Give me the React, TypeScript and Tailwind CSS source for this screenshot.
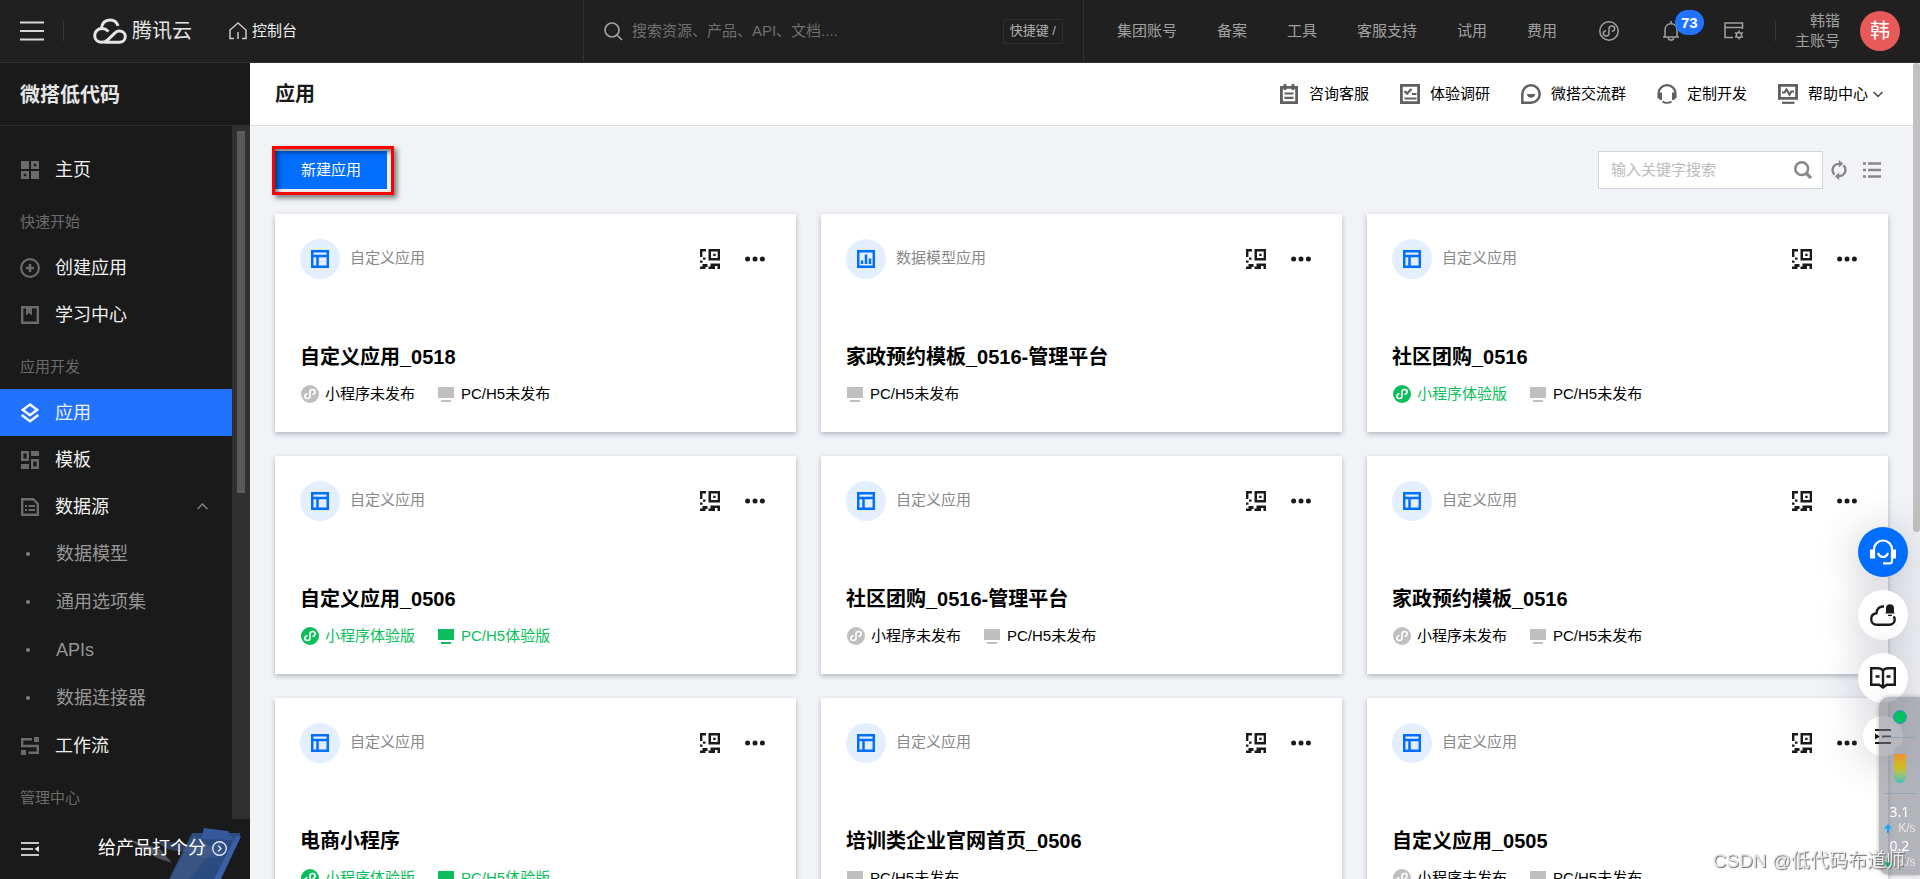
import React, { useState } from 'react';

type IconProps = { className?: string };
type AppKind = 'custom' | 'model';
type Status = 'draft' | 'trial';

interface AppItem {
  name: string;
  kind: AppKind;
  mini?: Status;
  pc: Status;
}

const apps: AppItem[] = [
  { name: '自定义应用_0518', kind: 'custom', mini: 'draft', pc: 'draft' },
  { name: '家政预约模板_0516-管理平台', kind: 'model', pc: 'draft' },
  { name: '社区团购_0516', kind: 'custom', mini: 'trial', pc: 'draft' },
  { name: '自定义应用_0506', kind: 'custom', mini: 'trial', pc: 'trial' },
  { name: '社区团购_0516-管理平台', kind: 'custom', mini: 'draft', pc: 'draft' },
  { name: '家政预约模板_0516', kind: 'custom', mini: 'draft', pc: 'draft' },
  { name: '电商小程序', kind: 'custom', mini: 'trial', pc: 'trial' },
  { name: '培训类企业官网首页_0506', kind: 'custom', pc: 'draft' },
  { name: '自定义应用_0505', kind: 'custom', mini: 'draft', pc: 'draft' },
];

const topLinks = ['集团账号', '备案', '工具', '客服支持', '试用', '费用'];
const statusText: Record<Status, string> = { draft: '未发布', trial: '体验版' };

/* ---------- icons ---------- */

const MenuIcon = () => (
  <svg width="24" height="20" viewBox="0 0 24 20" fill="none" stroke="#d8d8d8" strokeWidth="2">
    <path d="M0 1.500h24M0 10h24M0 18.500h24" />
  </svg>
);

const CloudLogo = () => (
  <svg width="34" height="26" viewBox="0 0 34 26" fill="none" stroke="#e6e6e6" strokeWidth="3">
    <path d="M8.500 10.600C8.500 5.500 12 2 17 2c4 0 7 2.400 8.100 5.900" />
    <path d="M15.500 13.500C13.500 11.600 11.500 10.600 9 10.600c-4.300 0-7.300 3-7.300 6.800 0 4 3 6.900 7.300 6.900 2.500 0 4.200-1 6-2.700l7-6.700c1.400-1.300 2.700-1.900 4.300-1.900 3.400 0 6 2.500 6 5.600 0 3.200-2.600 5.700-6 5.700H11.500" />
  </svg>
);

const HomeIcon = () => (
  <svg width="18" height="18" viewBox="0 0 18 18" fill="none" stroke="#c8c8c8" strokeWidth="1.500">
    <path d="M5 16.500H1V8l8-7 8 7v8.500h-4M9 10v7" />
  </svg>
);

const TopSearchIcon = () => (
  <svg width="19" height="19" viewBox="0 0 19 19" fill="none" stroke="#a0a0a0" strokeWidth="1.700">
    <circle cx="8" cy="8" r="7" />
    <path d="M13 13l5 5" />
  </svg>
);

// two hooks joined by a stem, drawn on a 20px grid
const miniPath = 'M6.500 9.700c-1.300.4-2.200 1.400-2.200 2.600 0 1.600 1.300 2.700 2.900 2.700s2.800-1.200 2.800-2.700V7.700C10 6.200 11.200 5 12.800 5s2.900 1.100 2.900 2.700c0 1.200-.9 2.200-2.200 2.600';

const MiniOutlineIcon = () => (
  <svg width="20" height="20" viewBox="0 0 20 20" fill="none" stroke="#a0a0a0" strokeWidth="1.500">
    <circle cx="10" cy="10" r="9.200" />
    <path d={miniPath} strokeLinecap="round" />
  </svg>
);

const BellIcon = () => (
  <svg width="18" height="20" viewBox="0 0 18 20" fill="none" stroke="#a0a0a0" strokeWidth="1.500">
    <path d="M1 16h16M3 16V9c0-3.600 2.500-6.300 6-6.300S15 5.400 15 9v7M9 0v3M6.300 17c.3 1.400 1.300 2.100 2.700 2.100s2.400-.7 2.700-2.100" />
  </svg>
);

const PanelGearIcon = () => (
  <svg width="20" height="18" viewBox="0 0 20 18" fill="none" stroke="#a0a0a0" strokeWidth="1.500">
    <path d="M9 15.500H1V1h17.500v6M1 5.500h17.500" />
    <circle cx="15" cy="13" r="2.600" />
    <path d="M15 8.500v2M15 15.500v2M11 10.700l1.800 1M17.200 14.300l1.800 1M11 15.300l1.800-1M17.200 11.700l1.800-1" />
  </svg>
);

const ClipboardIcon = () => (
  <svg width="20" height="20" viewBox="0 0 20 20" fill="none" stroke="#606060" strokeWidth="2.800">
    <path d="M2.400 3.400h15.200v15.200H2.400zM6 0v6M14 0v6" />
    <path d="M5.500 9.500h9M5.500 13.800h9" strokeWidth="2.200" />
  </svg>
);

const SurveyIcon = () => (
  <svg width="20" height="20" viewBox="0 0 20 20" fill="none" stroke="#606060" strokeWidth="2.800">
    <path d="M1.400 1.400h17.200v17.200H1.400z" />
    <path d="M4.500 7l2.500 2.600L11.500 5M12 10h4.500M4.500 14.500h12" strokeWidth="2.200" />
  </svg>
);

const ChatIcon = () => (
  <svg width="20" height="20" viewBox="0 0 20 20" fill="none" stroke="#606060" strokeWidth="2.500">
    <path d="M1.300 18.700V10a8.700 8.700 0 1 1 8.700 8.700z" />
    <path d="M5.800 10h8.400c-.3 2.200-2 3.700-4.200 3.700S6.100 12.200 5.800 10z" fill="#606060" stroke="none" />
  </svg>
);

const HeadphoneIcon = () => (
  <svg width="20" height="20" viewBox="0 0 20 20" fill="none" stroke="#606060" strokeWidth="2.200">
    <path d="M1.500 14V9.500a8.500 8.300 0 0 1 17 0V14" />
    <path d="M1 8.500h4V16H3L1 14zM19 8.500h-4V16h2l2-2z" fill="#606060" stroke="none" />
    <path d="M5.500 17.500c2.500 1.800 6.500 1.800 9 0" strokeWidth="2" />
  </svg>
);

const MonitorPulseIcon = () => (
  <svg width="20" height="20" viewBox="0 0 20 20" fill="none" stroke="#606060" strokeWidth="2.800">
    <path d="M1.400 1.400h17.200v13H1.400z" />
    <path d="M4 8.500h2.500L8.500 5.500l3 5 1.800-3H16" strokeWidth="2.200" />
    <path d="M4 18.800h12.500" strokeWidth="2.200" />
  </svg>
);

const ChevronDown = () => (
  <svg width="10" height="7" viewBox="0 0 10 7" fill="none" stroke="#404040" strokeWidth="1.500">
    <path d="M.6 1L5 5.500 9.400 1" />
  </svg>
);

const SearchIcon = () => (
  <svg width="18" height="18" viewBox="0 0 18 18" fill="none" stroke="#888" strokeWidth="2.500">
    <circle cx="7.700" cy="7.700" r="6.400" />
    <path d="M12.500 12.500l4.500 4.500" strokeWidth="3.200" />
  </svg>
);

const RefreshIcon = () => (
  <svg width="16" height="20" viewBox="0 0 16 20" fill="none" stroke="#888" strokeWidth="2.400">
    <path d="M9 4c-4.300-.6-7.500 2.200-7.500 6 0 1.900.7 3.400 2 4.600M7 16c4.300.6 7.500-2.200 7.500-6 0-1.900-.7-3.400-2-4.600" />
    <path d="M7.800 0v7.600l4.400-3.800zM8.200 20v-7.600l-4.400 3.800z" fill="#888" stroke="none" />
  </svg>
);

const ListIcon = () => (
  <svg width="18" height="16" viewBox="0 0 18 16" fill="none" stroke="#888" strokeWidth="2.600">
    <path d="M0 1.500h3M5 1.500h13M0 8h3M5 8h13M0 14.500h3M5 14.500h13" />
  </svg>
);

const GridIcon = () => (
  <svg width="18" height="18" viewBox="0 0 18 18" fill="#6b6b6b">
    <path d="M0 0h8v8H0zM10 10h8v8h-8z" />
    <path fillRule="evenodd" d="M10 0h8v8h-8zM12.800 2.800v2.400h2.400V2.800zM0 10h8v8H0zM2.800 12.800v2.400h2.400v-2.400z" />
  </svg>
);

const PlusCircleIcon = () => (
  <svg width="20" height="20" viewBox="0 0 20 20" fill="none" stroke="#6b6b6b" strokeWidth="2.200">
    <circle cx="10" cy="10" r="8.900" />
    <path d="M10 6v8M6 10h8" strokeWidth="2.600" />
  </svg>
);

const BookmarkIcon = () => (
  <svg width="18" height="18" viewBox="0 0 18 18" fill="none" stroke="#6b6b6b" strokeWidth="2.400">
    <path d="M1.200 1.200h15.600v15.600H1.200z" />
    <path d="M5 1h6v8.500L8 7 5 9.500z" fill="#6b6b6b" stroke="none" />
  </svg>
);

const LayersIcon = () => (
  <svg width="18" height="20" viewBox="0 0 18 20" fill="none" stroke="#fff" strokeWidth="2.400">
    <path d="M9 1.500l7.200 5.300L9 12.200 1.800 6.800zM.7 12L9 18.300l8.300-6.300" />
  </svg>
);

const TemplateIcon = () => (
  <svg width="18" height="18" viewBox="0 0 18 18" fill="none" stroke="#6b6b6b" strokeWidth="2.400">
    <path d="M1.200 1.200h5.600v7.600H1.200zM11.200 9.200h5.600v7.600h-5.600z" />
    <path d="M10 0h8v5h-8zM0 13h8v5H0z" fill="#6b6b6b" stroke="none" />
  </svg>
);

const DataIcon = () => (
  <svg width="18" height="18" viewBox="0 0 18 18" fill="none" stroke="#6b6b6b" strokeWidth="2.400">
    <path d="M1.200 1.200h11L16.800 5.700v11.100H1.200z" />
    <path d="M4 8h2M7.500 8H14M4 12h2M7.500 12H14" strokeWidth="2.200" />
  </svg>
);

const FlowIcon = () => (
  <svg width="18" height="18" viewBox="0 0 18 18" fill="none" stroke="#6b6b6b" strokeWidth="2.400">
    <path d="M11 2.200H1.200V9h15.600v6.800H7.500" />
    <path d="M13 0h5v5h-5zM0 13h5v5H0z" fill="#6b6b6b" stroke="none" />
  </svg>
);

const CollapseIcon = () => (
  <svg width="18" height="14" viewBox="0 0 18 14" fill="none" stroke="#c8c8c8" strokeWidth="2">
    <path d="M0 1h18M0 7h12M0 13h18" />
    <path d="M18 4v6l-4.500-3z" fill="#e8e8e8" stroke="none" />
  </svg>
);

const CustomAppIcon = () => (
  <svg width="18" height="18" viewBox="0 0 18 18" fill="none" stroke="#006eff" strokeWidth="2.500">
    <path d="M1.200 1.200h15.600v15.600H1.200zM1 6h16M6.500 6v11" />
  </svg>
);

const ModelAppIcon = () => (
  <svg width="18" height="18" viewBox="0 0 18 18" fill="none" stroke="#006eff" strokeWidth="2.500">
    <path d="M1.200 1.200h15.600v15.600H1.200zM5 10.500V14M9 4.500V14M13 8.500V14" />
  </svg>
);

const QrIcon = () => (
  <svg width="20" height="20" viewBox="0 0 20 20" fill="#1a1a1a">
    <path d="M0 0h6v2.400H2.400V8H0zM3 8.500h2.500v2.200H3zM0 11.500h2.500v2.200H0z" />
    <path fillRule="evenodd" d="M8.500 0H20v11.500H8.500zM11 2.500v6.600h6.700V2.500z" />
    <path d="M13.200 4.700h2.400V7h-2.400zM2.500 15h5v3h-2v2H0v-2.400h2.500zM10.500 14.500H20V20h-2.500v-3H15v3H8.500v-2.400h2z" />
  </svg>
);

const DotsIcon = () => (
  <svg width="20" height="6" viewBox="0 0 20 6" fill="#1a1a1a">
    <circle cx="2.600" cy="3" r="2.500" />
    <circle cx="10" cy="3" r="2.500" />
    <circle cx="17.400" cy="3" r="2.500" />
  </svg>
);

const MiniIcon: React.FC<IconProps> = ({ className }) => (
  <svg width="18" height="18" viewBox="0 0 20 20" className={className}>
    <circle cx="10" cy="10" r="10" fill="currentColor" />
    <path d={miniPath} fill="none" stroke="#fff" strokeWidth="1.800" strokeLinecap="round" />
  </svg>
);

const PcIcon: React.FC<IconProps> = ({ className }) => (
  <svg width="16" height="15" viewBox="0 0 16 15" fill="currentColor" className={className}>
    <path d="M0 0h16v11H0zM3 13h10v2H3z" />
  </svg>
);

const ClipboardArt = () => (
  <svg width="130" height="52" viewBox="0 0 130 52">
    <path d="M12 12l32 10 12 14-15-5z" fill="#50545f" />
    <path d="M76 6h48v6L104 52H53z" fill="#2b4a80" />
    <path d="M120 9h5L105 52h-7z" fill="#3a5fa8" />
    <path d="M40 14c10 2 18 0 30 3 16 4 26 4 36-3v14c-8 4-16 4-24 0-14-6-28 0-42-14z" fill="#46618f" opacity=".55" />
    <path d="M88 1l24 3 6 9-33-1z" fill="#35589c" />
    <path d="M78 8l-24 44h20l24-30z" fill="#5a6b8c" opacity=".3" />
  </svg>
);

/* ---------- sidebar ---------- */

interface NavItemProps {
  icon: React.ReactNode;
  label: string;
  active?: boolean;
  expanded?: boolean;
}

const NavItem: React.FC<NavItemProps> = ({ icon, label, active, expanded }) => (
  <a
    href="#"
    aria-expanded={expanded}
    className={`flex h-[47px] items-center pl-5 pr-6 text-lg text-[#f0f0f0] ${active ? 'bg-[#2173ff]' : ''}`}
  >
    <span className="flex w-5 justify-center mr-[15px]">{icon}</span>
    <span className="flex-1">{label}</span>
    {expanded && (
      <svg width="11" height="7" viewBox="0 0 11 7" fill="none" stroke="#808080" strokeWidth="1.500">
        <path d="M.6 6l4.900-5 4.900 5" />
      </svg>
    )}
  </a>
);

const SubItem: React.FC<{ label: string }> = ({ label }) => (
  <a href="#" className="flex h-12 items-center pl-[26px] text-lg text-[#969696]">
    <span className="w-1 h-1 rounded-full bg-[#808080] mr-[26px]" />
    {label}
  </a>
);

const NavTitle: React.FC<{ children: React.ReactNode }> = ({ children }) => (
  <h3 className="h-[51px] pt-[19px] pl-5 text-[15px] leading-5 text-[#6b6b6b]">{children}</h3>
);

const Sidebar: React.FC = () => (
  <aside className="flex w-[250px] shrink-0 flex-col bg-[#1a1a1a]">
    <h2 className="h-[63px] shrink-0 border-b border-[#303030] pl-5 text-xl font-bold leading-[64px] text-[#e6e6e6]">
      微搭低代码
    </h2>
    <div className="flex min-h-0 flex-1">
      <nav className="flex-1 overflow-hidden pt-5">
        <NavItem icon={<GridIcon />} label="主页" />
        <NavTitle>快速开始</NavTitle>
        <NavItem icon={<PlusCircleIcon />} label="创建应用" />
        <NavItem icon={<BookmarkIcon />} label="学习中心" />
        <NavTitle>应用开发</NavTitle>
        <NavItem icon={<LayersIcon />} label="应用" active />
        <NavItem icon={<TemplateIcon />} label="模板" />
        <NavItem icon={<DataIcon />} label="数据源" expanded />
        <SubItem label="数据模型" />
        <SubItem label="通用选项集" />
        <SubItem label="APIs" />
        <SubItem label="数据连接器" />
        <NavItem icon={<FlowIcon />} label="工作流" />
        <NavTitle>管理中心</NavTitle>
      </nav>
      <div className="w-[18px] bg-[#303030] pl-[5px] pt-[5px]">
        <div className="h-[362px] w-2 bg-[#5a5a5a]" />
      </div>
    </div>
    <div className="relative flex h-[60px] shrink-0 items-center pl-[21px] pr-[23px]">
      <div className="absolute bottom-0 right-1">
        <ClipboardArt />
      </div>
      <button aria-label="收起菜单">
        <CollapseIcon />
      </button>
      <a href="#" className="relative ml-auto flex items-center gap-1.5 pb-0.5 text-lg leading-7 text-white">
        给产品打个分
        <svg width="15" height="15" viewBox="0 0 15 15" fill="none" stroke="#dfe5f0" strokeWidth="1.400">
          <circle cx="7.500" cy="7.500" r="6.800" />
          <path d="M6 4.500l3 3-3 3" />
        </svg>
      </a>
    </div>
  </aside>
);

/* ---------- top bar ---------- */

const TopBar: React.FC = () => (
  <header className="flex h-[63px] shrink-0 items-center border-b border-[#303030] bg-[#202020] pr-5 text-[15px] text-[#a0a0a0]">
    <button aria-label="菜单" className="ml-5">
      <MenuIcon />
    </button>
    <span className="ml-[19px] h-5 w-px bg-[#383838]" />
    <a href="#" className="ml-[29px] flex items-center gap-[5px] text-xl leading-6 text-[#e6e6e6]">
      <CloudLogo />
      腾讯云
    </a>
    <a href="#" className="ml-[37px] flex items-center gap-[5px] text-[#f0f0f0]">
      <HomeIcon />
      控制台
    </a>
    <div className="ml-auto flex h-full w-[501px] items-center border-x border-[#303030] pl-5 pr-5">
      <TopSearchIcon />
      <input
        aria-label="搜索"
        placeholder="搜索资源、产品、API、文档...."
        className="ml-[9px] min-w-0 flex-1 bg-transparent outline-none placeholder:text-[#707070]"
      />
      <span className="h-[25px] rounded-xs border border-[#303030] px-1.5 text-[13px] leading-[21px] text-[#b0b0b0]">快捷键 /</span>
    </div>
    <nav className="ml-[33px] flex items-center gap-10">
      {topLinks.map(t => (
        <a key={t} href="#">{t}</a>
      ))}
    </nav>
    <button aria-label="小程序" className="ml-[42px]">
      <MiniOutlineIcon />
    </button>
    <button aria-label="消息" className="relative ml-[43px]">
      <BellIcon />
      <span className="absolute -top-[11px] left-[13px] h-[25px] rounded-full bg-[#2173ff] px-1.5 text-[15px] font-bold leading-[25px] text-white">73</span>
    </button>
    <button aria-label="设置" className="ml-11">
      <PanelGearIcon />
    </button>
    <span className="ml-[31px] h-5 w-px bg-[#383838]" />
    <div className="ml-[19px] text-right leading-5">
      <div>韩锴</div>
      <div>主账号</div>
    </div>
    <button className="ml-5 h-10 w-10 rounded-full bg-[#e85a5a] text-xl text-white">韩</button>
  </header>
);

/* ---------- content ---------- */

const ToolLink: React.FC<{ icon: React.ReactNode; children: React.ReactNode }> = ({ icon, children }) => (
  <a href="#" className="flex items-center gap-2.5">
    {icon}
    <span className="flex items-center gap-[5px]">{children}</span>
  </a>
);

const StatusLabel: React.FC<{ type: 'mini' | 'pc'; status: Status }> = ({ type, status }) => {
  const iconColor = status === 'trial' ? 'text-[#0abf5b]' : 'text-[#bfbfbf]';
  return (
    <span className={`flex items-center ${type === 'mini' ? 'gap-1.5' : 'gap-[7px]'} ${status === 'trial' ? 'text-[#0abf5b]' : 'text-black'}`}>
      {type === 'mini' ? <MiniIcon className={iconColor} /> : <PcIcon className={iconColor} />}
      {type === 'mini' ? '小程序' : 'PC/H5'}
      {statusText[status]}
    </span>
  );
};

const AppCard: React.FC<{ app: AppItem }> = ({ app }) => (
  <article className="bg-white px-[25px] pt-[25px] pb-[26px] text-[15px] shadow-[0_2px_5px_rgba(54,58,80,0.35)]">
    <div className="flex items-center">
      <span className="flex h-10 w-10 items-center justify-center rounded-full bg-[#e3efff]">
        {app.kind === 'model' ? <ModelAppIcon /> : <CustomAppIcon />}
      </span>
      <span className="ml-2.5 pb-0.5 text-[#888]">{app.kind === 'model' ? '数据模型应用' : '自定义应用'}</span>
      <button aria-label="二维码" className="ml-auto">
        <QrIcon />
      </button>
      <button aria-label="更多" className="ml-[25px] mr-1.5">
        <DotsIcon />
      </button>
    </div>
    <h3 className="mt-[63px] text-xl font-bold leading-[30px] text-black">{app.name}</h3>
    <div className="mt-2.5 flex h-6 items-center gap-[23px] pl-px">
      {app.mini && <StatusLabel type="mini" status={app.mini} />}
      <StatusLabel type="pc" status={app.pc} />
    </div>
  </article>
);

/* ---------- overlays ---------- */

const FloatingTools: React.FC = () => (
  <div className="fixed right-3 top-[527px] flex flex-col items-center gap-[13px]">
    <button aria-label="在线客服" className="flex h-[50px] w-[50px] items-center justify-center rounded-full bg-[#006eff] shadow-[0_4px_40px_rgba(54,58,80,0.3)]">
      <svg width="26" height="26" viewBox="0 0 26 26" fill="none" stroke="#fff" strokeWidth="2.200">
        <path d="M4 19V10.500C4 5.500 8 1.500 13 1.500s9 4 9 9V22c0 1.400-.8 2.300-2.300 2.300H13" />
        <path d="M0 10.500h5v9H0zM21 10.500h5v9h-5z" fill="#fff" stroke="none" />
        <path d="M8 14c1.200 3 3 4 5 4s3.800-1 5-4" />
      </svg>
    </button>
    <button aria-label="云通知" className="flex h-[50px] w-[50px] items-center justify-center rounded-full bg-white shadow-[0_4px_40px_rgba(54,58,80,0.3)]">
      <svg width="26" height="22" viewBox="0 0 26 22" fill="none" stroke="#1a1a1a" strokeWidth="2.400">
        <path d="M14 2.500C9.500 2 6.500 5 6.500 9.300 3.300 9.700 1.200 12 1.200 15c0 3.200 2.300 5.700 5.500 5.700h12.500c3.200 0 5.500-2.400 5.500-5.200 0-1.200-.4-2.300-1-3.200" />
        <path d="M16 8.500V4c0-2.200 1.700-3.700 4-3.700s4 1.500 4 3.700v4.500l1 1H15zM18 10.700h4v1.200h-4z" fill="#1a1a1a" stroke="none" />
      </svg>
    </button>
    <button aria-label="文档" className="flex h-[50px] w-[50px] items-center justify-center rounded-full bg-white shadow-[0_4px_40px_rgba(54,58,80,0.3)]">
      <svg width="26" height="22" viewBox="0 0 26 22" fill="none" stroke="#1a1a1a" strokeWidth="2.400">
        <path d="M13 3.500C12 2 10.500 1.300 8.500 1.300H1.200v16.500h8L13 20.500l3.800-2.700h8V1.300h-7.300c-2 0-3.500.7-4.500 2.200zM13 3.500V20M5.500 9.500h4M16.500 9.500h4" />
      </svg>
    </button>
    <button aria-label="收起" className="flex h-10 w-10 items-center justify-center rounded-full bg-white shadow-[0_4px_40px_rgba(54,58,80,0.3)]">
      <svg width="16" height="15" viewBox="0 0 16 15" fill="none" stroke="#1a1a1a" strokeWidth="2">
        <path d="M0 1h16M7 7.500h9M0 14h16" />
        <path d="M0 4.500v6l5-3z" fill="#1a1a1a" stroke="none" />
      </svg>
    </button>
  </div>
);

const NetworkWidget: React.FC = () => (
  <div className="fixed bottom-1 right-0 flex h-[178px] w-[41px] flex-col items-center rounded-l-[10px] bg-[#7d7f89]/55 text-white shadow-[0_0_4px_rgba(0,0,0,0.3)]">
    <span className="mt-[13px] h-3.5 w-3.5 rounded-full border border-[#3a8fd0] bg-[#00c060]" />
    <span className="mt-[13px] h-px w-8 bg-[#8fa6b2]" />
    <span className="mt-2 h-[37px] w-3 overflow-hidden rounded-full bg-[#a9abb5] pt-2">
      <span className="block h-full bg-linear-to-b from-[#f09030] via-[#c8c020] to-[#30c0b8]" />
    </span>
    <span className="mt-2.5 h-px w-8 bg-[#8fa6b2]" />
    <span className="mt-2 font-['Noto_Sans',sans-serif] text-sm leading-5">3.1</span>
    <span className="flex h-3 w-8 items-center justify-between text-xs leading-3 text-[#e8e8e8]">
      <svg width="8" height="9" viewBox="0 0 8 9" fill="#10a8ff"><path d="M4 0l4 4.500H5V9H3V4.500H0z" /></svg>
      K/s
    </span>
    <span className="mt-0.5 font-['Noto_Sans',sans-serif] text-sm leading-5">0.2</span>
    <span className="flex h-3 w-8 items-center justify-between text-xs leading-3 text-[#e8e8e8]">
      <svg width="8" height="9" viewBox="0 0 8 9" fill="#00b060"><path d="M4 9l4-4.500H5V0H3v4.500H0z" /></svg>
      K/s
    </span>
  </div>
);

const App: React.FC = () => {
  const [keyword, setKeyword] = useState('');

  return (
    <div className="flex h-screen flex-col overflow-hidden bg-[#f2f3f7] font-['Liberation_Sans','Noto_Sans_CJK_SC',sans-serif] text-black">
      <TopBar />
      <div className="flex min-h-0 flex-1">
        <Sidebar />
        <main className="min-w-0 flex-1 overflow-hidden">
          <div className="flex h-[63px] items-center border-b border-[#dcdde1] bg-white pl-[25px] pr-[30px] text-[15px]">
            <h1 className="text-xl font-bold text-[#1a1a1a]">应用</h1>
            <div className="ml-auto flex items-center gap-[31px]">
              <ToolLink icon={<ClipboardIcon />}>咨询客服</ToolLink>
              <ToolLink icon={<SurveyIcon />}>体验调研</ToolLink>
              <ToolLink icon={<ChatIcon />}>微搭交流群</ToolLink>
              <ToolLink icon={<HeadphoneIcon />}>定制开发</ToolLink>
              <ToolLink icon={<MonitorPulseIcon />}>帮助中心<ChevronDown /></ToolLink>
            </div>
          </div>
          <div className="p-[25px]">
            <div className="flex items-center text-[15px]">
              <div className="relative">
                <button className="h-[38px] w-28 bg-[#006eff] text-white">新建应用</button>
                {/* highlight frame round the create button */}
                <div className="pointer-events-none absolute -left-[3px] -right-[7px] -top-[5px] -bottom-1.5 border-3 border-[#f00] shadow-[3px_3px_5px_rgba(0,0,0,0.5),inset_3px_3px_5px_rgba(0,0,0,0.5)]" />
              </div>
              <div className="ml-auto flex h-[38px] w-[225px] items-center border border-[#cfd5de] bg-white pl-3 pr-2.5">
                <input
                  aria-label="关键字"
                  value={keyword}
                  onChange={e => setKeyword(e.target.value)}
                  placeholder="输入关键字搜索"
                  className="min-w-0 flex-1 outline-none placeholder:text-[#bbb]"
                />
                <button aria-label="搜索">
                  <SearchIcon />
                </button>
              </div>
              <button aria-label="刷新" className="ml-2">
                <RefreshIcon />
              </button>
              <button aria-label="列表视图" className="ml-4 mr-[7px]">
                <ListIcon />
              </button>
            </div>
            <div className="mt-[25px] grid grid-cols-3 gap-x-[25px] gap-y-6">
              {apps.map(app => (
                <AppCard key={app.name} app={app} />
              ))}
            </div>
          </div>
        </main>
        <div className="w-[7px] shrink-0">
          <div className="h-[469px] rounded-full bg-[#c1c1c1]" />
        </div>
      </div>
      <FloatingTools />
      <NetworkWidget />
      <div className="pointer-events-none fixed bottom-1 right-[15px] text-[19px] leading-7 text-[#e8e8e8] [text-shadow:1px_1px_1px_#666]">
        CSDN @低代码布道师
      </div>
    </div>
  );
};

export default App;
